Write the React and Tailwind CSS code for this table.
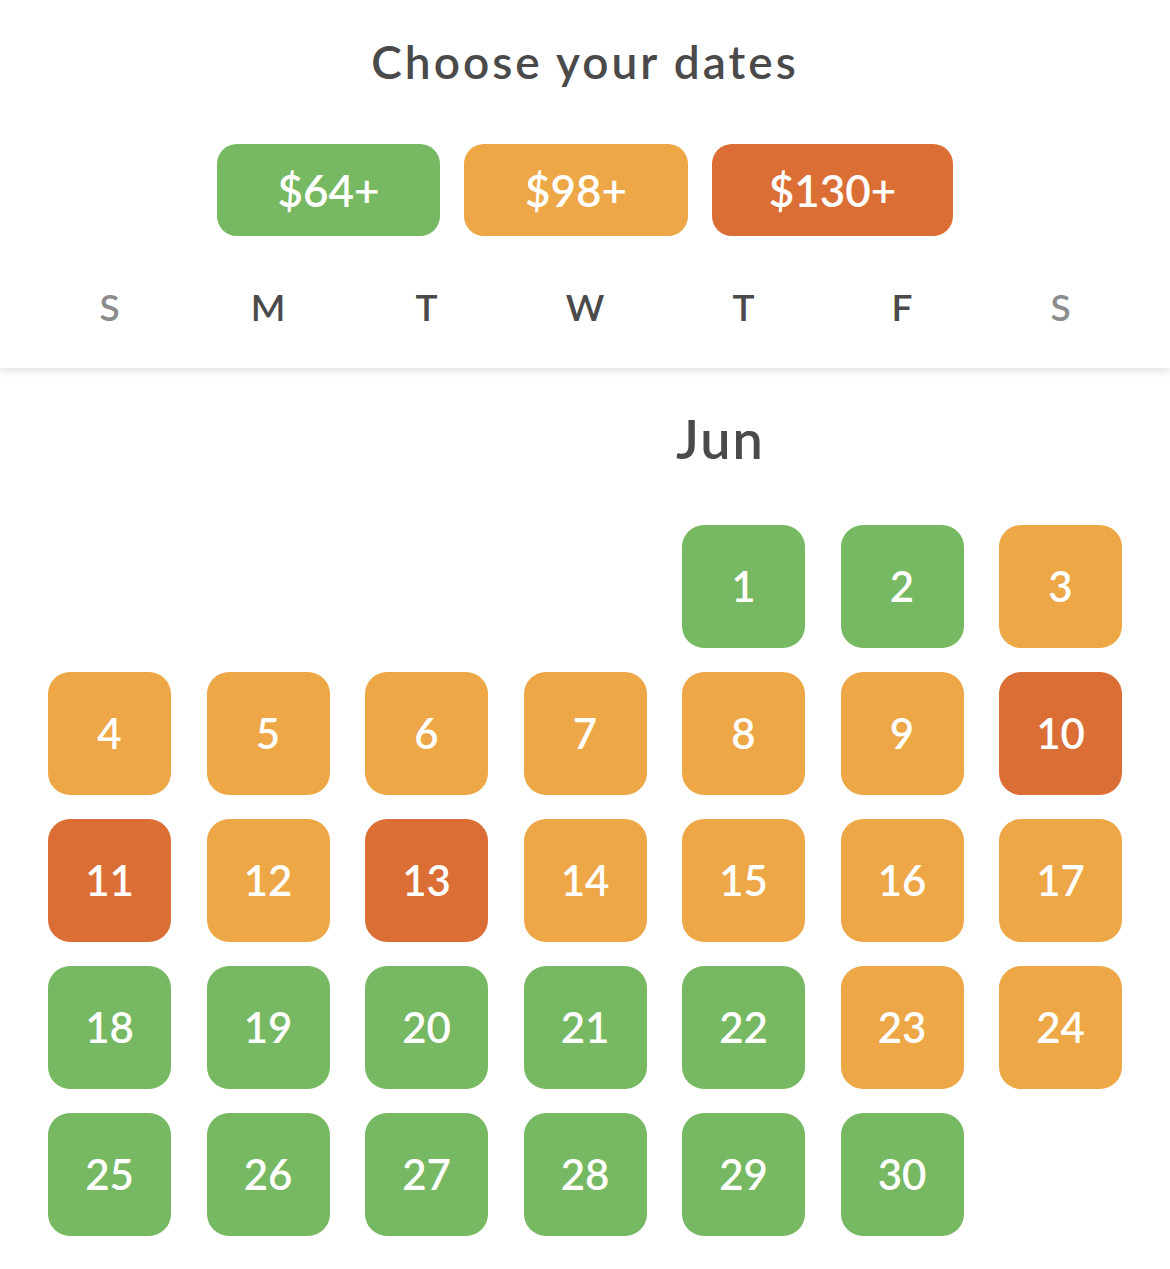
import React from 'react'

const prices = [
  { label: '$64+', color: 'bg-[#77b862]', width: 'w-[223px]' },
  { label: '$98+', color: 'bg-[#eda746]', width: 'w-[224px]' },
  { label: '$130+', color: 'bg-[#db6e35]', width: 'w-[241px]' }
]

const weekdays = [
  { label: 'S', muted: true },
  { label: 'M' },
  { label: 'T' },
  { label: 'W' },
  { label: 'T' },
  { label: 'F' },
  { label: 'S', muted: true }
]

// g = cheap, o = mid, r = expensive — one letter per day of June
const levels = 'ggo' + 'oooooo' + 'r' + 'ror' + 'oooo' + 'ggggg' + 'oo' + 'gggggg'
const levelClass = {
  g: 'bg-[#77b862]',
  o: 'bg-[#eda746]',
  r: 'bg-[#db6e35]'
}

const days = Array.from({ length: 30 }, (_, i) => ({ day: i + 1, level: levels[i] }))

export default function App() {
  return (
    <div className="min-h-[1269px] w-[1170px] bg-white font-['Lato','Open_Sans',sans-serif] text-[#4a4a4a]">
      <header className="relative z-10 bg-white pt-[35px] pb-[41px] shadow-[0_3px_8px_rgba(0,0,0,0.12)]">
        <h1 className="text-center text-[46px] leading-[54px] font-semibold tracking-[3px]">Choose your dates</h1>

        <div className="mt-[55px] flex justify-center gap-[24px]">
          {prices.map((p) => (
            <div
              key={p.label}
              className={`${p.color} ${p.width} flex h-[92px] items-center justify-center rounded-[20px] text-[44px] font-semibold text-white`}
            >
              {p.label}
            </div>
          ))}
        </div>

        <div className="mt-[51px] grid grid-cols-7 gap-x-[35.5px] px-[48px]">
          {weekdays.map((d, i) => (
            <span
              key={i}
              className={`text-center text-[37px] leading-[40px] font-semibold ${d.muted ? 'text-[#8c8c8c]' : 'text-[#4a4a4a]'}`}
            >
              {d.label}
            </span>
          ))}
        </div>
      </header>

      <section className="px-[48px] pt-[40px] pb-[33px]">
        <div className="grid grid-cols-7 gap-x-[35.5px]">
          <h2 className="col-start-5 col-span-3 -ml-[6px] text-[54px] leading-[62px] font-semibold tracking-[2px]">Jun</h2>
        </div>

        <div className="mt-[55px] grid grid-cols-7 gap-x-[35.5px] gap-y-[24px]">
          {days.map((d) => (
            <div
              key={d.day}
              className={`${levelClass[d.level]} ${d.day === 1 ? 'col-start-5' : ''} flex h-[123px] items-center justify-center rounded-[22px] text-[42px] font-semibold text-white`}
            >
              {d.day}
            </div>
          ))}
        </div>
      </section>
    </div>
  )
}
